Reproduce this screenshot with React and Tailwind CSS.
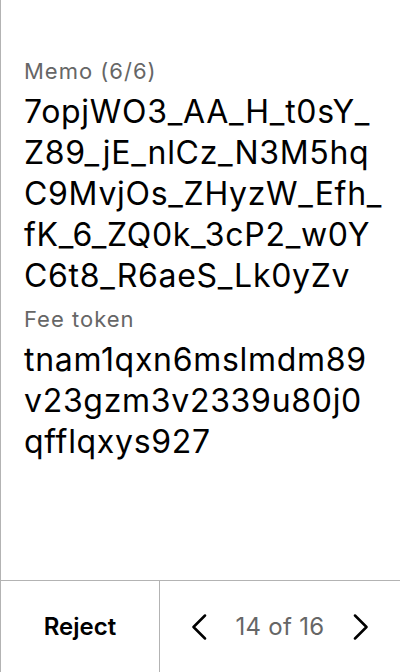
import React from "react";

// values are pre-split so the wrap points stay the same as the signer screen
const fields = [
  {
    label: "Memo (6/6)",
    lines: ["7opjWO3_AA_H_t0sY_", "Z89_jE_nlCz_N3M5hq", "C9MvjOs_ZHyzW_Efh_", "fK_6_ZQ0k_3cP2_w0Y", "C6t8_R6aeS_Lk0yZv"],
  },
  {
    label: "Fee token",
    lines: ["tnam1qxn6mslmdm89", "v23gzm3v2339u80j0", "qfflqxys927"],
  },
];

const Chevron = ({ direction }) => (
  <svg width="16" height="26" viewBox="0 0 16 26" fill="none" stroke="currentColor" strokeWidth="2.5" strokeLinecap="round" strokeLinejoin="round">
    {direction === "left" ? <polyline points="14,1.5 2.5,13 14,24.5" /> : <polyline points="2,1.5 13.5,13 2,24.5" />}
  </svg>
);

const App = () => {
  return (
    <div className="flex h-[672px] w-[400px] flex-col border-l border-[#b3b3b3] bg-white font-['Inter',sans-serif] text-black">
      <div className="flex-1 pl-[23px] pr-4 pt-[57px]">
        {fields.map((field) => (
          <div key={field.label} className="mb-[9px]">
            <div className="text-[22px] leading-[28px] tracking-[1px] text-[#666666]">{field.label}</div>
            <div className="mt-[6px] text-[32px] leading-[41px] tracking-[0.7px]">
              {field.lines.map((line) => (
                <div key={line} className="whitespace-nowrap">{line}</div>
              ))}
            </div>
          </div>
        ))}
      </div>

      <div className="flex h-[92px] border-t border-[#b3b3b3]">
        <button type="button" className="flex w-[159px] items-center justify-center border-r border-[#b3b3b3] text-[24px] font-semibold">
          Reject
        </button>
        <div className="flex flex-1 items-center justify-center gap-7">
          <Chevron direction="left" />
          <span className="text-[24px] tracking-[0.3px] text-[#666666]">14 of 16</span>
          <Chevron direction="right" />
        </div>
      </div>
    </div>
  );
};

export default App;
